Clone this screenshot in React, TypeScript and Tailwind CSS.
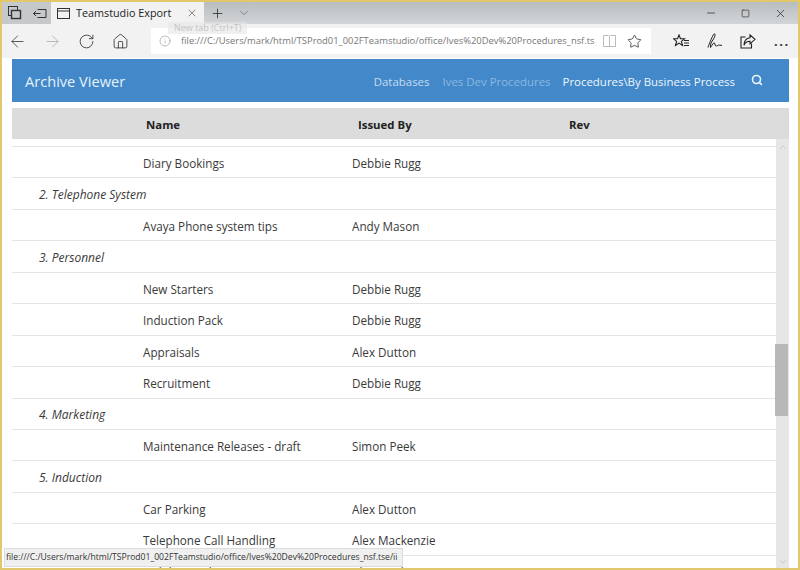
import React from 'react';
import { ArrowLeft, ArrowRight, ChevronDown, ChevronUp, Home, Info, Minus, Plus, RotateCw, Search, Square, Star, X } from 'lucide-react';

const rows = [
  { name: 'Diary Bookings', by: 'Debbie Rugg' },
  { group: '2. Telephone System' },
  { name: 'Avaya Phone system tips', by: 'Andy Mason' },
  { group: '3. Personnel' },
  { name: 'New Starters', by: 'Debbie Rugg' },
  { name: 'Induction Pack', by: 'Debbie Rugg' },
  { name: 'Appraisals', by: 'Alex Dutton' },
  { name: 'Recruitment', by: 'Debbie Rugg' },
  { group: '4. Marketing' },
  { name: 'Maintenance Releases - draft', by: 'Simon Peek' },
  { group: '5. Induction' },
  { name: 'Car Parking', by: 'Alex Dutton' },
  { name: 'Telephone Call Handling', by: 'Alex Mackenzie' },
  { name: 'Holiday Booking', by: 'Alex Mackenzie' },
];

const url = 'file:///C:/Users/mark/html/TSProd01_002FTeamstudio/office/Ives%20Dev%20Procedures_nsf.ts';

function TabsAside() {
  return (
    <svg width="14" height="14" viewBox="0 0 14 14" fill="none" stroke="#333" strokeWidth="1">
      <rect x="0.5" y="0.5" width="9" height="9" />
      <rect x="3.5" y="4.5" width="9" height="8" fill="#c4c8cb" strokeWidth="1.4" />
    </svg>
  );
}

function SetAside() {
  return (
    <svg width="14" height="11" viewBox="0 0 14 11" fill="none" stroke="#333" strokeWidth="1">
      <path d="M4.500 1.500h8.500v8h-8.500M0.500 5.500h7M3 3l-2.500 2.500 2.500 2.500" />
    </svg>
  );
}

function Favorites() {
  return (
    <svg width="17" height="14" viewBox="0 0 17 14" fill="none" stroke="#222" strokeWidth="1.1">
      <path d="M6 1l1.500 3.800h4l-3.100 2.600 1.100 4.100-3.500-2.400-3.500 2.400 1.100-4.100L.6 4.800h4z" />
      <path d="M11 6.500h5M11 9h5M11 11.500h5" />
    </svg>
  );
}

function Notes() {
  return (
    <svg width="16" height="16" viewBox="0 0 16 16" fill="none" stroke="#222" strokeWidth="1">
      <path d="M1 14.500C2.500 10 5.500 2.500 7 1c1.500-1 1.500 2-.5 5S3 11 3.500 14.500c2-3 3.500-5.500 4-4.500s.5 3.500 2 3 2-1.500 5.500-.5" />
    </svg>
  );
}

function Share() {
  return (
    <svg width="16" height="15" viewBox="0 0 16 15" fill="none" stroke="#222" strokeWidth="1.1">
      <path d="M5.500 3H1v11h10.500V9.500" />
      <path d="M10 .8l5 4.500-5 4.500V7.300C7 7.300 5 8.800 4 11.300c0-4.500 2.500-7 6-7.500z" />
    </svg>
  );
}

function Row({ name, by, group }: { name?: string; by?: string; group?: string }) {
  return (
    <div className="flex h-[31.45px] shrink-0 items-center border-b border-[#e4e4e4] pt-[3px] text-[11.7px] text-[#3a3a3a]">
      {group ? (
        <span className="pl-[27px] text-[12px] italic">{group}</span>
      ) : (
        <>
          <span className="w-[340px] pl-[131px]">{name}</span>
          <span>{by}</span>
        </>
      )}
    </div>
  );
}

export default function App() {
  return (
    <div className="relative flex h-[570px] w-[800px] flex-col overflow-hidden border-2 border-[#e2c86c] bg-white font-['Open_Sans',sans-serif]">
      {/* title bar */}
      <div className="flex h-[22px] shrink-0 items-stretch bg-gradient-to-b from-[#b9bdc0] to-[#d2d5d7]">
        <div className="flex w-[49px] items-center gap-[11px] bg-[#c6c9cb] pl-[6px]">
          <TabsAside />
          <SetAside />
        </div>
        <div className="flex w-[153px] items-center bg-[#f2f2f2] pl-[6px] pr-[6px] text-[10.8px] text-[#222]">
          <svg width="13" height="11" viewBox="0 0 13 11" fill="none" stroke="#333" className="mr-[6px]">
            <rect x="0.5" y="0.5" width="12" height="10" />
            <path d="M0.500 3h12" />
          </svg>
          <span className="flex-1">Teamstudio Export</span>
          <X size={12} strokeWidth={1} />
        </div>
        <div className="flex items-center gap-[12px] pl-[6px] text-[#222]">
          <Plus size={15} strokeWidth={1.2} />
          <ChevronDown size={14} strokeWidth={1} className="text-[#555]" />
        </div>
        <div className="ml-auto flex items-center gap-[24px] pr-[11px] text-[#222]">
          <Minus size={12} strokeWidth={1.4} />
          <Square size={9} strokeWidth={1.6} />
          <X size={13} strokeWidth={1.3} />
        </div>
      </div>

      {/* toolbar */}
      <div className="flex h-[34px] shrink-0 items-center bg-[#f2f2f2]">
        <div className="flex items-center gap-[16px] pl-[6px] text-[#333]">
          <ArrowLeft size={19} strokeWidth={1} />
          <ArrowRight size={19} strokeWidth={1} className="text-[#aaa]" />
          <RotateCw size={17} strokeWidth={1.2} />
          <Home size={17} strokeWidth={1.2} className="ml-[1px]" />
        </div>
        <div className="ml-[22px] flex h-[26px] w-[500px] items-center overflow-hidden bg-white pl-[8px] pr-[9px] text-[9.4px] text-[#777]">
          <Info size={12} strokeWidth={1} className="shrink-0" />
          <span className="ml-[10px] flex-1 whitespace-nowrap">{url}</span>
          <svg width="15" height="14" viewBox="0 0 15 14" fill="none" stroke="#bbb" className="shrink-0">
            <path d="M1.500 1.500h5l1 1 1-1h5v11h-12zM7.500 2.500v10" />
          </svg>
          <Star size={15} strokeWidth={1.2} className="ml-[10px] shrink-0 text-[#222]" />
        </div>
        <div className="ml-[22px] flex items-center gap-[17px]">
          <Favorites />
          <Notes />
          <Share />
          <span className="ml-[1px] text-[13px] font-bold leading-none tracking-[1.5px] text-[#333]">...</span>
        </div>
      </div>

      {/* page */}
      <div className="flex min-h-0 flex-1 flex-col pl-[10px] pr-[9px] pt-[1px]">
        <nav className="flex h-[43px] shrink-0 items-center bg-[#4388c9] pl-[13px] pr-[26px] pt-[2px] text-[11.45px]">
          <span className="flex-1 text-[14.6px] text-[#e6f2fb]">Archive Viewer</span>
          <span className="text-[#c3dcf1]">Databases</span>
          <span className="ml-[13px] text-[#8cb8e0]">Ives Dev Procedures</span>
          <span className="ml-[12px] text-[#eef6fc]">Procedures\By Business Process</span>
          <Search size={12} strokeWidth={3.2} className="ml-[16px] -translate-y-[2px] text-[#eef6fc]" />
        </nav>

        <div className="mt-[6px] flex h-[31px] shrink-0 items-center bg-[#dcdcdc] pt-[2px] text-[11.4px] font-bold text-[#222]">
          <span className="w-[346px] pl-[134px]">Name</span>
          <span className="w-[211px]">Issued By</span>
          <span>Rev</span>
        </div>

        <div className="flex min-h-0 flex-1">
          <div className="flex min-w-0 flex-1 flex-col overflow-hidden">
            <div className="h-[8px] shrink-0 border-b border-[#e4e4e4]" />
            {rows.map((row, i) => (
              <Row key={i} {...row} />
            ))}
          </div>
          <div className="flex w-[13px] shrink-0 flex-col items-center justify-between bg-[#e6e6e6] text-[#999]">
            <ChevronUp size={10} strokeWidth={1} className="mt-[3px]" />
            <ChevronDown size={10} strokeWidth={1} className="mb-[1px]" />
          </div>
        </div>
      </div>

      {/* scrollbar thumb */}
      <div className="absolute left-[773px] top-[342px] h-[72px] w-[13px] bg-[#b8b8b8]" />

      {/* tooltip over the toolbar */}
      <div className="absolute left-[166px] top-[20px] bg-[#e6e6e6]/60 px-[6px] text-[9px] leading-[12px] text-[#c4c4c4]">
        New tab (Ctrl+T)
      </div>

      {/* status bubble */}
      <div className="absolute bottom-[1px] left-[2px] h-[19px] w-[399px] overflow-hidden whitespace-nowrap border border-[#dcdcdc] bg-[#f0f0f0] pl-[1px] text-[8.6px] leading-[17px] text-[#333]">
        file:///C:/Users/mark/html/TSProd01_002FTeamstudio/office/Ives%20Dev%20Procedures_nsf.tse/ii
      </div>
    </div>
  );
}
